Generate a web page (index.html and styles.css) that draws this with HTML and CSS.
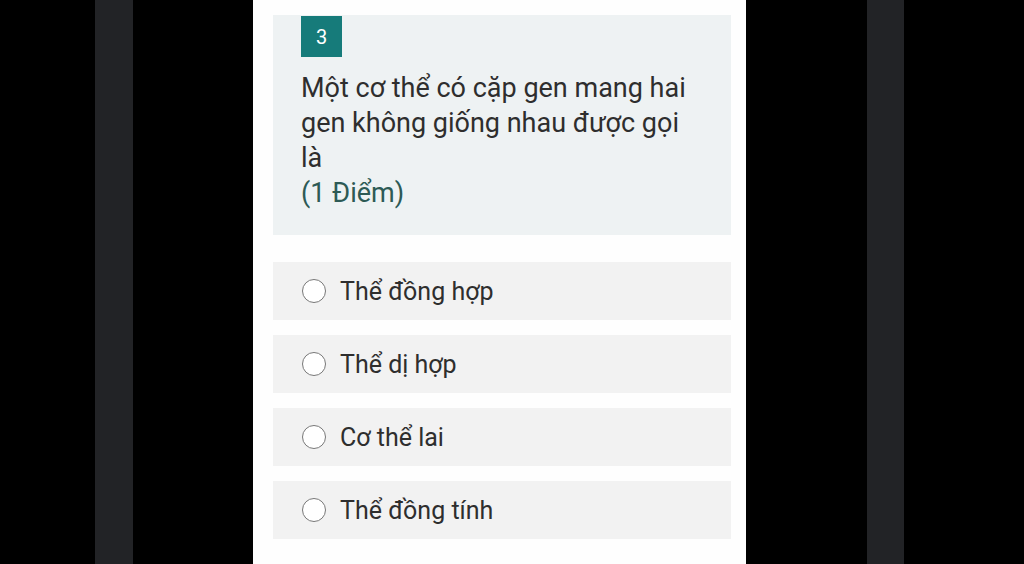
FILE: index.html
```html
<!DOCTYPE html>
<html lang="vi">
<head>
  <meta charset="UTF-8" />
  <title>Câu hỏi 3</title>
  <link rel="stylesheet" href="styles.css">
</head>
<body>

  <div class="man-hinh">
    <div class="vien vien-trai"></div>

    <div class="trang">
      <div class="cau-hoi">
        <div class="so-cau">3</div>
        <p class="noi-dung">Một cơ thể có cặp gen mang hai gen không giống nhau được gọi là</p>
        <p class="diem">(1 Điểm)</p>
      </div>

      <div class="lua-chon">
        <label class="dap-an"><span class="tron"></span>Thể đồng hợp</label>
        <label class="dap-an"><span class="tron"></span>Thể dị hợp</label>
        <label class="dap-an"><span class="tron"></span>Cơ thể lai</label>
        <label class="dap-an"><span class="tron"></span>Thể đồng tính</label>
      </div>
    </div>

    <div class="vien vien-phai"></div>
  </div>

</body>
</html>
```

FILE: styles.css
```css
body {
  margin: 0;
  background-color: #000;
  font-family: Roboto, "Noto Sans", Arial, sans-serif;
  height: 100vh;
  overflow: hidden;
}

.man-hinh {
  display: flex;
  height: 100%;
}

.vien {
  width: 38px;
  background-color: #222326;
}

.vien-trai {
  margin-left: 95px;
  margin-right: 120px;
}

.vien-phai {
  width: 37px;
  margin-left: 121px;
}

.trang {
  width: 493px;
  background-color: #fefefe;
  padding: 15px 15px 0 20px;
  box-sizing: border-box;
}

.cau-hoi {
  background-color: #eef2f3;
  height: 220px;
  box-sizing: border-box;
  padding: 1px 35px 0 28px;
}

.so-cau {
  width: 41px;
  height: 41px;
  background-color: #167b7a;
  color: #fff;
  font-size: 20px;
  display: flex;
  align-items: center;
  justify-content: center;
}

.noi-dung {
  margin: 14px 0 0;
  font-size: 27px;
  line-height: 35px;
  color: #2e2e2e;
}

.diem {
  margin: 0;
  font-size: 27px;
  line-height: 34px;
  color: #2d5a55;
}

.lua-chon {
  display: flex;
  flex-direction: column;
  gap: 15px;
  margin-top: 27px;
}

.dap-an {
  height: 58px;
  background-color: #f2f2f2;
  display: flex;
  align-items: center;
  padding-left: 29px;
  font-size: 25px;
  color: #2e2e2e;
}

.tron {
  width: 22px;
  height: 22px;
  border: 1.8px solid #777;
  border-radius: 50%;
  background-color: #fff;
  margin-right: 14px;
}
```
